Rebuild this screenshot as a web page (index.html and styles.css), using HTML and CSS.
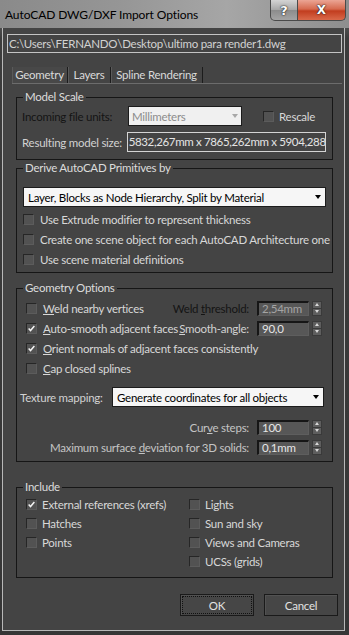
FILE: index.html
```html
<!DOCTYPE html>
<html lang="en">
  <head>
    <meta charset="UTF-8" />
    <title>AutoCAD DWG/DXF Import Options</title>
    <link rel="stylesheet" href="styles.css">
  </head>
  <body>
    <div class="window">
      <div class="titlebar">
        <span class="title">AutoCAD DWG/DXF Import Options</span>
        <div class="caption-buttons">
          <span class="cap-btn help">?</span>
          <span class="cap-btn close">X</span>
        </div>
      </div>

      <div class="client">
        <div class="path-field">C:\Users\FERNANDO\Desktop\ultimo para render1.dwg</div>

        <div class="tabs">
          <span class="tab tab-geometry active">Geometry</span>
          <span class="tab tab-layers">Layers</span>
          <span class="tab tab-spline">Spline Rendering</span>
        </div>

        <fieldset class="group model-scale">
          <legend>Model Scale</legend>
          <div class="row">
            <span class="label label-units disabled">Incoming file units:</span>
            <div class="combo combo-units disabled">Millimeters<span class="arrow"></span></div>
            <div class="check rescale"><span class="box"></span>Rescale</div>
          </div>
          <div class="row row-size">
            <span class="label label-units">Resulting model size:</span>
            <div class="text-field size-field">5832,267mm x 7865,262mm x 5904,288mm</div>
          </div>
        </fieldset>

        <fieldset class="group derive">
          <legend>Derive AutoCAD Primitives by</legend>
          <div class="combo combo-derive">Layer, Blocks as Node Hierarchy, Split by Material<span class="arrow"></span></div>
          <div class="check-list">
            <div class="check"><span class="box"></span>Use Extrude modifier to represent thickness</div>
            <div class="check"><span class="box"></span>Create one scene object for each AutoCAD Architecture one</div>
            <div class="check"><span class="box"></span>Use scene material definitions</div>
          </div>
        </fieldset>

        <fieldset class="group geometry">
          <legend>Geometry Options</legend>
          <div class="row opt-row">
            <div class="check"><span class="box"></span><span><u>W</u>eld nearby vertices</span></div>
            <div class="spin-group">
              <span class="label disabled">Weld <u>t</u>hreshold:</span>
              <div class="spin-field dim">2,54mm</div>
              <div class="spinner"><span class="up"></span><span class="down"></span></div>
            </div>
          </div>
          <div class="row opt-row">
            <div class="check"><span class="box checked"><svg viewBox="0 0 11 11"><polyline points="2,5.5 4.3,8 9,2.5" /></svg></span><span><u>A</u>uto-smooth adjacent faces</span></div>
            <div class="spin-group">
              <span class="label"><u>S</u>mooth-angle:</span>
              <div class="spin-field">90,0</div>
              <div class="spinner"><span class="up"></span><span class="down"></span></div>
            </div>
          </div>
          <div class="row opt-row">
            <div class="check"><span class="box checked"><svg viewBox="0 0 11 11"><polyline points="2,5.5 4.3,8 9,2.5" /></svg></span><span><u>O</u>rient normals of adjacent faces consistently</span></div>
          </div>
          <div class="row opt-row">
            <div class="check"><span class="box"></span><span><u>C</u>ap closed splines</span></div>
          </div>

          <div class="row texture-row">
            <span class="label">Texture mapping:</span>
            <div class="combo combo-texture">Generate coordinates for all objects<span class="arrow"></span></div>
          </div>

          <div class="row spin-row first">
            <div class="spin-group">
              <span class="label soft">Cur<u>v</u>e steps:</span>
              <div class="spin-field">100</div>
              <div class="spinner"><span class="up"></span><span class="down"></span></div>
            </div>
          </div>
          <div class="row spin-row">
            <div class="spin-group">
              <span class="label soft">Maximum surface <u>d</u>eviation for 3D solids:</span>
              <div class="spin-field">0,1mm</div>
              <div class="spinner"><span class="up"></span><span class="down"></span></div>
            </div>
          </div>
        </fieldset>

        <fieldset class="group include">
          <legend>Include</legend>
          <div class="include-grid">
            <div class="check"><span class="box checked"><svg viewBox="0 0 11 11"><polyline points="2,5.5 4.3,8 9,2.5" /></svg></span>External references (xrefs)</div>
            <div class="check"><span class="box"></span>Lights</div>
            <div class="check"><span class="box"></span>Hatches</div>
            <div class="check"><span class="box"></span>Sun and sky</div>
            <div class="check"><span class="box"></span>Points</div>
            <div class="check"><span class="box"></span>Views and Cameras</div>
            <div></div>
            <div class="check"><span class="box"></span>UCSs (grids)</div>
          </div>
        </fieldset>

        <div class="buttons">
          <div class="btn default"><span>OK</span></div>
          <div class="btn">Cancel</div>
        </div>
      </div>
    </div>
  </body>
</html>
```

FILE: styles.css
```css
* {
  box-sizing: border-box;
}

body {
  margin: 0;
  background-color: #3a3a3a;
  font-family: Lato, "Open Sans", sans-serif;
  font-size: 11.5px;
  letter-spacing: -0.25px;
}

.window {
  width: 349px;
  height: 635px;
  display: flex;
  flex-direction: column;
  background: linear-gradient(#7c7c7c, #3c3c3c 6%, #363636);
}

/* title bar */

.titlebar {
  height: 28px;
  flex: none;
  display: flex;
  justify-content: space-between;
  padding-left: 5px;
  background: linear-gradient(90deg, #8a8a8a 0%, #969696 35%, #a6a6a6 65%, #8e8e8e 100%);
}

.title {
  line-height: 29px;
  font-size: 12px;
  letter-spacing: -0.1px;
  color: #000;
}

.caption-buttons {
  display: flex;
  margin-right: 3px;
}

.cap-btn {
  height: 21px;
  display: flex;
  align-items: center;
  justify-content: center;
  font-family: "DejaVu Sans", sans-serif;
  font-weight: bold;
  letter-spacing: 0;
  color: #fff;
  text-shadow: 0 0 2px #222, 0 0 1px #000;
  border: 1px solid #4a4a4a;
  border-top: none;
}

.help {
  width: 28px;
  font-size: 13px;
  border-radius: 0 0 0 5px;
  background: linear-gradient(#d4d4d4, #a8a8a8 48%, #8c8c8c 52%, #a4a4a4);
}

.close {
  width: 48px;
  font-size: 12px;
  border-left: none;
  border-radius: 0 0 5px 0;
  background: linear-gradient(#eba594, #d66a4f 45%, #c23d1f 55%, #d9694a);
}

/* client area */

.client {
  flex: 1;
  margin: 0 4px 4px 2px;
  background-color: #444444;
  border: 1px solid #b8b8b8;
  border-top: none;
  display: flex;
  flex-direction: column;
}

.path-field {
  margin: 6px 2px 0 4px;
  height: 19px;
  border: 1px solid #c4c4c4;
  padding-left: 1px;
  line-height: 17px;
  color: #d2d2d2;
  white-space: nowrap;
  overflow: hidden;
}

.tabs {
  display: flex;
  margin: 14px 2px 0 9px;
  height: 17px;
  border-bottom: 1px solid #6c6c6c;
}

.tab {
  line-height: 16px;
  text-align: center;
  color: #dadada;
  border-right: 1px solid #1c1c1c;
  box-shadow: inset 1px 0 0 #5a5a5a;
}

.tab-geometry {
  width: 56px;
}

.tab-layers {
  width: 43px;
}

.tab-spline {
  width: 92px;
}

.tab.active {
  background-color: #484848;
}

/* group boxes */

.group {
  margin: 1px 11px 0 13px;
  min-width: 0;
  border: 1px solid #161616;
  padding: 2px 6px 7px;
}

.group legend {
  padding: 0 2px;
  line-height: 14px;
  color: #dcdcdc;
}

.model-scale {
  margin-top: 6px;
}

.derive {
  padding-top: 12px;
  padding-bottom: 3px;
}

.geometry {
  margin-top: 8px;
  padding-top: 3px;
  padding-bottom: 4px;
}

.include {
  margin-top: 18px;
  padding-top: 1px;
  padding-bottom: 6px;
}

.row {
  display: flex;
  align-items: center;
  height: 20px;
}

.row-size {
  margin-top: 6px;
}

.label {
  color: #d2d2d2;
  white-space: nowrap;
}

.label.disabled {
  color: #141414;
}

.label.soft {
  color: #c4c4c4;
}

.label-units {
  width: 105px;
  margin-left: -1px;
}

/* combos and fields */

.combo {
  display: flex;
  align-items: center;
  height: 20px;
  padding-left: 4px;
  background-color: #f6f6f6;
  border: 1px solid #1c1c1c;
  color: #000;
  white-space: nowrap;
}

.combo .arrow {
  margin-left: auto;
  margin-right: 4px;
  border-left: 3.5px solid transparent;
  border-right: 3.5px solid transparent;
  border-top: 4px solid #000;
}

.combo.disabled {
  color: #8c8c8c;
  background-color: #f0f0f0;
}

.combo.disabled .arrow {
  margin-right: 3px;
  border-top-color: #a8a8a8;
}

.combo-units {
  width: 114px;
  margin-left: 1px;
  padding-left: 3px;
}

.combo-derive {
  width: 100%;
}

.combo-texture {
  width: 212px;
  margin-left: auto;
  margin-right: 2px;
}

.text-field {
  height: 20px;
  border: 1px solid #d4d4d4;
  padding-left: 1px;
  line-height: 18px;
  color: #e4e4e4;
  white-space: nowrap;
  overflow: hidden;
}

.size-field {
  width: 200px;
  letter-spacing: -0.35px;
}

/* checkboxes */

.check {
  display: flex;
  align-items: center;
  height: 20px;
  color: #d8d8d8;
  white-space: nowrap;
}

.box {
  flex: none;
  width: 11px;
  height: 11px;
  margin-right: 6px;
  background-color: #525252;
  border: 1px solid #262626;
  border-right-color: #5c5c5c;
  border-bottom-color: #5c5c5c;
}

.box svg {
  display: block;
  width: 9px;
  height: 9px;
}

.box polyline {
  fill: none;
  stroke: #f4f4f4;
  stroke-width: 1.8;
}

.rescale {
  margin-left: 21px;
}

.rescale .box {
  margin-right: 5px;
}

.check-list {
  margin-top: 2px;
}

.opt-row {
  padding-left: 3px;
}

/* spinners */

.spin-group {
  display: flex;
  align-items: center;
  margin-left: auto;
  padding-right: 4px;
}

.spin-group .label {
  margin-right: 8px;
}

.spin-field {
  width: 52px;
  height: 15px;
  padding-left: 3px;
  background-color: #575757;
  border-top: 2px solid #161616;
  border-left: 2px solid #161616;
  border-right: 1px solid #5e5e5e;
  border-bottom: 1px solid #5e5e5e;
  line-height: 12px;
  color: #e6e6e6;
}

.spin-field.dim {
  color: #a4a4a4;
}

.spinner {
  width: 10px;
  height: 15px;
  margin-left: 3px;
  display: flex;
  flex-direction: column;
  background-color: #5e5e5e;
  border: 1px solid #3a3a3a;
}

.spinner span {
  flex: 1;
  display: flex;
  align-items: center;
  justify-content: center;
}

.spinner .up {
  border-bottom: 1px solid #3a3a3a;
}

.spinner .up::after,
.spinner .down::after {
  content: "";
  border-left: 2.5px solid transparent;
  border-right: 2.5px solid transparent;
}

.spinner .up::after {
  border-bottom: 3px solid #d8d8d8;
}

.spinner .down::after {
  border-top: 3px solid #d8d8d8;
}

.texture-row {
  margin-top: 9px;
  margin-left: -3px;
}

.spin-row {
  justify-content: flex-end;
}

.spin-row.first {
  margin-top: 10px;
}

/* include */

.include-grid {
  display: grid;
  grid-template-columns: 163px 1fr;
  grid-auto-rows: 19px;
  padding-left: 3px;
}

.include-grid .check {
  height: 19px;
}

.include-grid .box {
  margin-right: 5px;
}

/* buttons */

.buttons {
  display: flex;
  justify-content: flex-end;
  gap: 10px;
  margin: 16px 6px 0 0;
}

.btn {
  width: 74px;
  height: 22px;
  display: flex;
  align-items: center;
  justify-content: center;
  background-color: #464646;
  border: 1px solid #1a1a1a;
  box-shadow: inset 1px 1px 0 #525252;
  color: #e2e2e2;
}

.btn.default {
  padding: 1px;
}

.btn.default span {
  width: 100%;
  height: 100%;
  display: flex;
  align-items: center;
  justify-content: center;
  outline: 1px dotted #111;
  outline-offset: -1px;
}
```
